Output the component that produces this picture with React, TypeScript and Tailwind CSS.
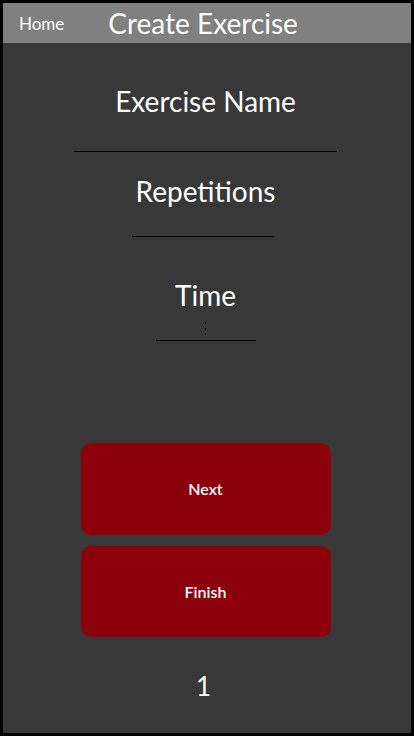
import React from "react";

export default function App() {
  const font = { fontFamily: 'Lato, "Open Sans", sans-serif' };
  return (
    <div className="w-[414px] h-[736px] bg-black p-[3px]" style={font}>
      <div className="w-full h-full bg-[#383838] flex flex-col">
        <div className="w-full h-[40px] bg-[#808080] flex items-center shrink-0">
          <span className="text-white text-[17px] pl-[16px] leading-none">Home</span>
          <span className="text-white text-[28px] ml-[44px] leading-none">Create Exercise</span>
        </div>

        <div className="flex flex-col items-center pr-[3px]">
          <div className="mt-[41px] text-white text-[28px] leading-[34px]">Exercise Name</div>
          <div className="mt-[33px] w-[263px] h-px bg-black"></div>

          <div className="mt-[22px] text-white text-[28px] leading-[34px]">Repetitions</div>
          <div className="mt-[28px] mr-[6px] w-[142px] h-px bg-black"></div>

          <div className="mt-[41px] text-white text-[28px] leading-[34px]">Time</div>
          <div className="mt-[10px] h-[13px] flex flex-col justify-between items-center">
            <div className="w-px h-[2px] bg-black"></div>
            <div className="w-px h-[2px] bg-black"></div>
            <div className="w-px h-[2px] bg-black"></div>
          </div>
          <div className="mt-[5px] w-[100px] h-px bg-black"></div>

          <button className="mt-[102px] w-[250px] h-[92px] rounded-[10px] bg-[#8b000b] text-white text-[16px] font-semibold">Next</button>
          <button className="mt-[11px] w-[250px] h-[91px] rounded-[10px] bg-[#8b000b] text-white text-[16px] font-semibold">Finish</button>

          <div className="mt-[34px] mr-[4px] text-white text-[26px] leading-[30px]">1</div>
        </div>
      </div>
    </div>
  );
}
